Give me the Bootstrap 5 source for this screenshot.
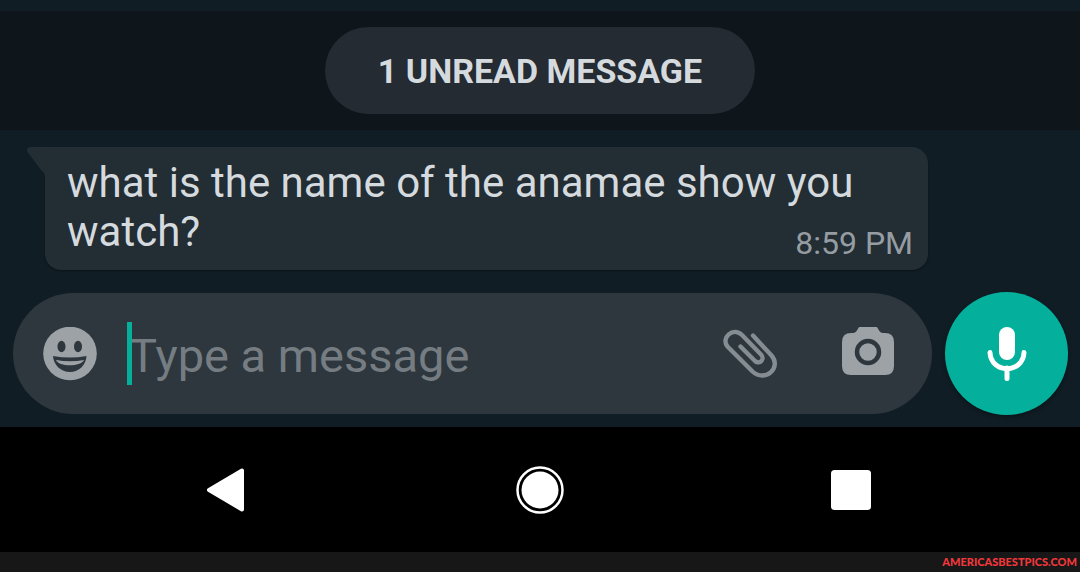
<!DOCTYPE html>
<html lang="en">
<head>
<meta charset="utf-8">
<meta name="viewport" content="width=device-width, initial-scale=1">
<title>Chat</title>
<link href="https://cdn.jsdelivr.net/npm/bootstrap@5.3.0/dist/css/bootstrap.min.css" rel="stylesheet">
<style>
  body { background: #101d24; font-family: Roboto, sans-serif; color: #d5dade; }
  .unread-band { background: #0e151b; margin-top: 11px; padding: 16px; }
  .unread-pill { background: #242b32; font-size: 34px; font-weight: 700; line-height: 39px; padding: 25px 53px 23px; }
  .thread { padding: 17px 152px 0 45px; }
  .bubble { background: #222d34; border-radius: 0 16px 16px 16px; padding: 11px 16px 14px 22px; box-shadow: 0 1px 2px rgba(0,0,0,.4); }
  .bubble-text { font-size: 42px; line-height: 49px; }
  .bubble-tail { left: -18px; top: 0; }
  .bubble-time { font-size: 32px; line-height: 38px; right: 15px; bottom: 8px; color: #969da2; }
  .composer { padding: 22px 12px 12px 13px; gap: 13px; }
  .entry { background: #2d373d; height: 121px; padding: 0 38px 0 30px; }
  .entry-field { font-size: 47px; line-height: 54px; color: #d5dade; }
  .entry-field, .entry-field:focus { background: transparent; border: 0; box-shadow: none; padding: 4px 0 0; color: #d5dade; outline: 0; }
  .entry-field::placeholder { color: #757d83; opacity: 1; }
  .entry-caret { width: 5px; height: 63px; left: -2px; top: -3px; background: #05b09b; }
  .mic-btn { width: 123px; height: 123px; background: #04b09c; box-shadow: 0 2px 4px rgba(0,0,0,.3); }
  .plain-btn { background: none; border: 0; padding: 0; }
  .system-bar { background: #000; padding: 0 73px; height: 125px; }
  .credit { background: #171718; height: 20px; padding-right: 3px; font: 900 11px/20px Lato, sans-serif; }
  .credit a { color: #f2383b; }
</style>
</head>
<body>
<main>
  <div class="unread-band d-flex justify-content-center">
    <div class="unread-pill rounded-pill">1 UNREAD MESSAGE</div>
  </div>

  <section class="thread">
    <div class="bubble position-relative">
      <svg class="bubble-tail position-absolute" width="19" height="30" viewBox="0 0 19 30" aria-hidden="true"><path fill="#222d34" d="M19 0H4Q-1 0 .5 5L14 23Q18 26 18 30H19Z"/></svg>
      <p class="bubble-text mb-0">what is the name of the anamae show you<br>watch?</p>
      <time class="bubble-time position-absolute" datetime="20:59">8:59 PM</time>
    </div>
  </section>

  <form class="composer d-flex align-items-center" onsubmit="return false">
    <div class="entry rounded-pill d-flex align-items-center flex-grow-1">
      <button type="button" class="plain-btn d-flex" aria-label="Emoji">
        <svg width="54" height="54" viewBox="0 0 54 54"><circle cx="27" cy="26.500" r="26.800" fill="#9da2a6"/><g fill="#2d373d"><ellipse cx="18.500" cy="19.500" rx="4" ry="5.800"/><ellipse cx="35" cy="19.500" rx="4" ry="5.800"/><path d="M10 29Q27 32 43.500 29C43 38 36 45 27 45S10.500 38 10 29Z"/></g><path fill="#9da2a6" d="M13 33Q27 35.500 41 33C38 40 15.500 40 13 33Z"/></svg>
      </button>
      <div class="position-relative flex-grow-1 ms-4 ps-2">
        <div class="position-relative">
          <input type="text" class="entry-field form-control rounded-0" placeholder="Type a message" aria-label="Type a message">
          <span class="entry-caret position-absolute"></span>
        </div>
      </div>
      <button type="button" class="plain-btn d-flex" aria-label="Attach">
        <svg width="56" height="52" viewBox="0 0 56 52" fill="none" stroke="#858d93" stroke-width="4.400" stroke-linecap="round"><path d="M18.500 18.500L33 33C37.500 37 43.500 31 39 26.500L20 7C11 -1.500 -1.500 10 5.500 18.500L30.500 43.500C43 55 60 39.500 49.500 27.500L31 7.500"/></svg>
      </button>
      <button type="button" class="plain-btn d-flex ms-5" aria-label="Camera">
        <svg class="ms-3" width="52" height="54" viewBox="0 2 52 54"><path fill="#9da2a6" d="M20 1H32C37 1 36 8 41 8H43Q52 8 52 17V41Q52 50 43 50H9Q0 50 0 41V17Q0 8 9 8H11C16 8 15 1 20 1Z"/><circle cx="26" cy="27" r="11" fill="none" stroke="#2d373d" stroke-width="4.500"/></svg>
      </button>
    </div>
    <button type="button" class="mic-btn btn rounded-circle flex-shrink-0 d-flex align-items-center justify-content-center border-0 p-0" aria-label="Record voice message">
      <svg width="40" height="54" viewBox="0 0 40 54"><rect x="12" y="0" width="16" height="33" rx="8" fill="#fff"/><path d="M3 25.500C4 47 36 47 37 25.500M20 41V51.500" fill="none" stroke="#fff" stroke-width="5" stroke-linecap="round"/></svg>
    </button>
  </form>
</main>

<nav class="system-bar d-flex align-items-center" aria-label="System navigation">
  <button type="button" class="plain-btn d-flex justify-content-center w-100" aria-label="Back">
    <svg width="48" height="48" viewBox="0 0 48 48"><path fill="#fff" stroke="#fff" stroke-width="4" stroke-linejoin="round" d="M4 24L37 4.500V43.500Z"/></svg>
  </button>
  <button type="button" class="plain-btn d-flex justify-content-center w-100" aria-label="Home">
    <svg width="48" height="48" viewBox="0 0 48 48"><circle cx="24" cy="24" r="22.500" fill="none" stroke="#fff" stroke-width="2.500"/><circle cx="24" cy="24" r="18.500" fill="#fff"/></svg>
  </button>
  <button type="button" class="plain-btn d-flex justify-content-center w-100" aria-label="Recent apps">
    <svg width="48" height="48" viewBox="0 0 48 48"><rect x="4" y="4" width="40" height="40" rx="3.500" fill="#fff"/></svg>
  </button>
</nav>
<footer class="credit text-end"><a class="text-decoration-none" href="#">AMERICASBESTPICS.COM</a></footer>
<script src="https://cdn.jsdelivr.net/npm/bootstrap@5.3.0/dist/js/bootstrap.bundle.min.js"></script>
</body>
</html>
